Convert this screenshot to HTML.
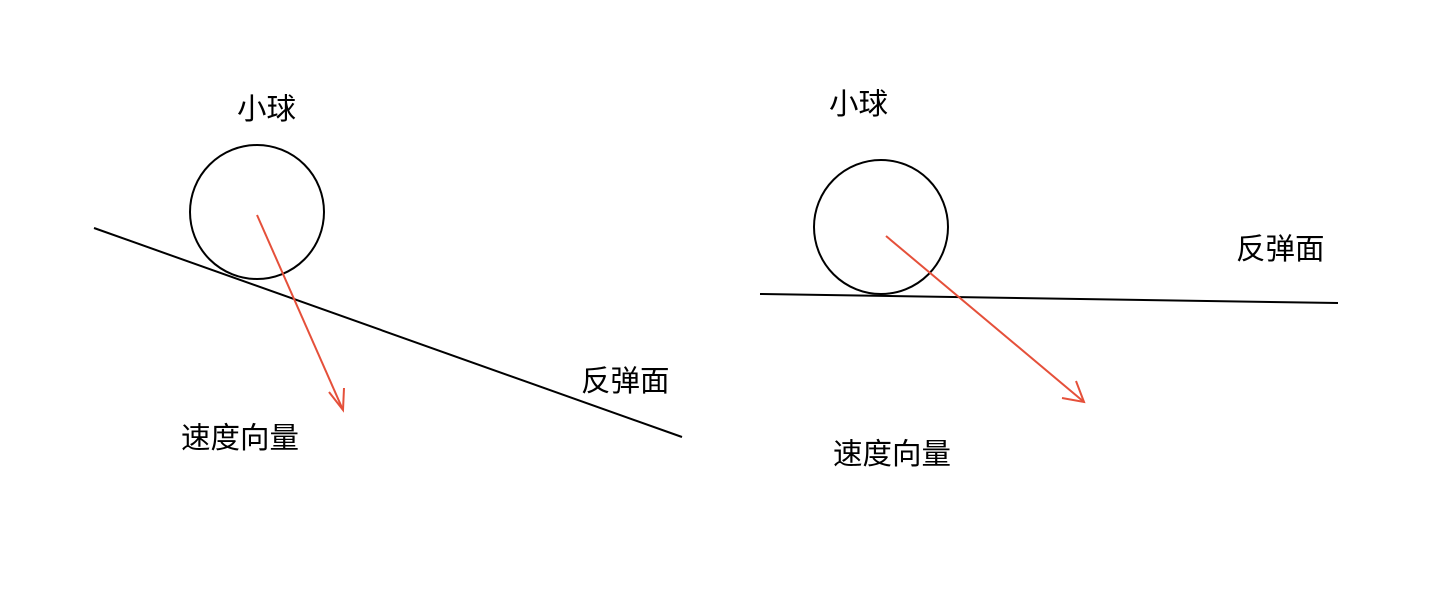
<!DOCTYPE html>
<html><head><meta charset="utf-8"><style>
html,body{margin:0;padding:0;background:#fff;}
svg{display:block}
text{font-family:"Liberation Sans","Noto Sans CJK SC",sans-serif;font-size:29.5px;fill:#000}
</style></head><body>
<svg width="1430" height="596" viewBox="0 0 1430 596" xmlns="http://www.w3.org/2000/svg">
<g fill="none" stroke="#000" stroke-width="2">
<circle cx="257" cy="212" r="67"/>
<line x1="94" y1="228" x2="682" y2="437"/>
<circle cx="881" cy="227" r="67"/>
<line x1="760" y1="294" x2="1338" y2="303"/>
</g>
<g fill="none" stroke="#e5503a" stroke-width="2">
<line x1="257" y1="215" x2="343" y2="410"/>
<polyline points="329,392 343,410 344,388"/>
<line x1="886" y1="236" x2="1084" y2="402"/>
<polyline points="1062,398 1084,402 1076,381"/>
</g>
<text x="237" y="119">小球</text>
<text x="581" y="391">反弹面</text>
<text x="181" y="448">速度向量</text>
<text x="829" y="114">小球</text>
<text x="1236" y="259">反弹面</text>
<text x="833" y="464">速度向量</text>
</svg>
</body></html>
